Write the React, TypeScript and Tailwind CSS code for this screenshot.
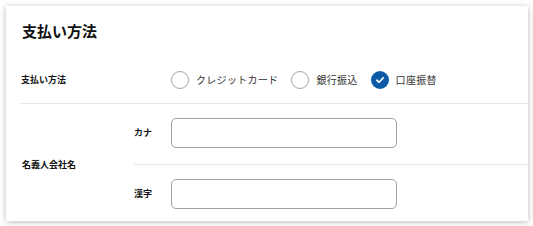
import { useState } from 'react';

type PaymentOption = {
  id: string;
  label: string;
};

const paymentOptions: PaymentOption[] = [
  { id: 'card', label: 'クレジットカード' },
  { id: 'bank', label: '銀行振込' },
  { id: 'debit', label: '口座振替' }
];

const fontStack = {
  fontFamily: '"Noto Sans CJK JP", "Noto Sans", sans-serif'
};

function Radio({
  label,
  checked,
  onClick
}: {
  label: string;
  checked: boolean;
  onClick: () => void;
}) {
  return (
    <label className="flex items-center cursor-pointer" onClick={onClick}>
      {checked ? (
        <span className="w-[18px] h-[18px] rounded-full bg-[#0d5aa7] flex items-center justify-center">
          <svg width="10" height="10" viewBox="0 0 10 10" fill="none">
            <path
              d="M1.8 5.2 L4 7.3 L8.2 2.9"
              stroke="white"
              strokeWidth="1.6"
              strokeLinecap="round"
              strokeLinejoin="round"
            />
          </svg>
        </span>
      ) : (
        <span className="w-[18px] h-[18px] rounded-full border border-[#a8a8a8] bg-white" />
      )}
      <span className="ml-[7px] text-[10px] text-[#333] tracking-[0.3px]">{label}</span>
    </label>
  );
}

function TextField({ label }: { label: string }) {
  return (
    <div className="flex items-center h-[60px] pb-[2px]">
      <div className="w-[37px] text-[9px] font-bold text-[#111]">{label}</div>
      <input
        type="text"
        className="w-[226px] h-[30px] rounded-[5px] border border-[#a0a0a0] bg-white px-2 text-[10px] outline-none"
      />
    </div>
  );
}

export default function App() {
  const [method, setMethod] = useState('debit');

  return (
    <div className="w-[533px] h-[226px] bg-white p-[6px]" style={fontStack}>
      <div className="w-[522px] h-[215px] bg-white shadow-[0_1px_6px_rgba(0,0,0,0.28)] overflow-hidden">
        <h2 className="pl-4 pt-[14px] h-[50px] text-[15px] font-bold text-[#111] leading-[22px]">
          支払い方法
        </h2>

        <div className="ml-[15px] flex items-center h-[48px] border-b border-[#dfe7ee]">
          <div className="w-[150px] text-[9px] font-bold text-[#111]">支払い方法</div>
          <div className="flex items-center gap-[13px]">
            {paymentOptions.map(option => (
              <Radio
                key={option.id}
                label={option.label}
                checked={method === option.id}
                onClick={() => setMethod(option.id)}
              />
            ))}
          </div>
        </div>

        <div className="ml-4 flex items-center">
          <div className="w-[112px] text-[9px] font-bold text-[#111]">名義人会社名</div>
          <div className="flex-1">
            <div className="border-b border-[#e3e6ea]">
              <TextField label="カナ" />
            </div>
            <TextField label="漢字" />
          </div>
        </div>
      </div>
    </div>
  );
}
